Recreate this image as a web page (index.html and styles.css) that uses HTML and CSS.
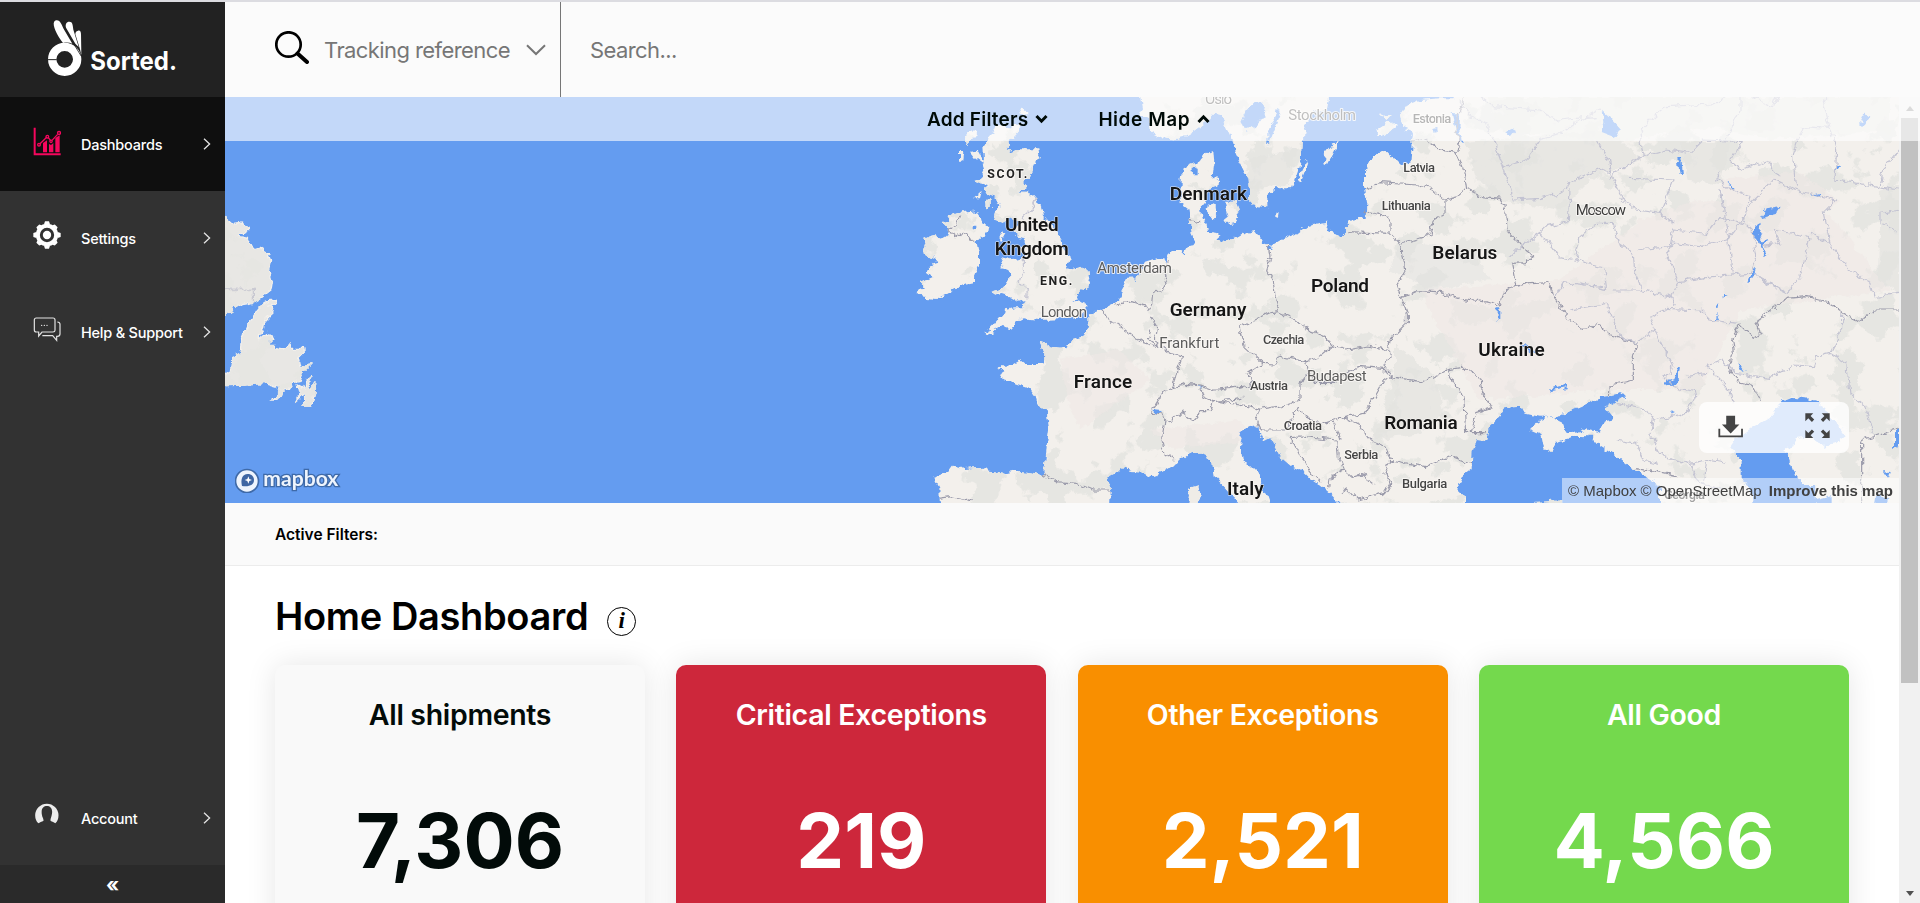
FILE: index.html
```html
<!DOCTYPE html>
<html lang="en">
<head>
<meta charset="utf-8">
<title>Sorted - Home Dashboard</title>
<link rel="stylesheet" href="styles.css">
</head>
<body>
<div class="top-strip"></div>
<div class="app">
  <nav class="sidebar">
    <div class="brand">
      <svg class="brand-logo" viewBox="60 50 420 190" role="img" aria-label="Sorted">
        <circle cx="134" cy="177" r="37.5" fill="none" stroke="#fff" stroke-width="25"/>
        <path d="M84 178h26" stroke="#222" stroke-width="3"/>
        <path d="M109 60C121 59 125 74 131 86L157 130C148 126 138 126 129 128C118 115 100 86 101 69C102 63 105 60 109 60Z" fill="#fff"/>
        <path d="M148 64C158 64 158 74 160 88L176 140L166 130L138 82C135 72 139 64 148 64Z" fill="#fff"/>
        <path d="M174 91C182 90 183 96 183 104L184 164L180 147L166 102C166 95 169 92 174 91Z" fill="#fff"/>
        <path d="M158 126L184 168" stroke="#222" stroke-width="2.5"/>
        <text x="211" y="209" textLength="260" lengthAdjust="spacingAndGlyphs" class="brand-word">Sorted.</text>
      </svg>
    </div>
    <a class="nav-item active">
      <svg class="nav-icon" viewBox="40 382 84 87"><g fill="#f5075d"><path d="M42 384h6v77h75v6H42z"/><path d="M70 430l12-8v36H70zM88 433l6 3 7-6v28H88zM107 415l13-8v51h-13z"/></g><g fill="none" stroke="#f5075d" stroke-width="4"><path d="M61 432L81 413M86 414l7 9M97 422l17-18"/><circle cx="58" cy="435" r="4"/><circle cx="83" cy="411" r="4"/><circle cx="94" cy="425" r="3.5"/><circle cx="118" cy="400" r="4.5"/></g></svg>
      <span class="nav-label">Dashboards</span>
      <svg class="nav-chevron" viewBox="0 0 8 12"><path d="M1 .8L6.6 6 1 11.2"/></svg>
    </a>
    <a class="nav-item">
      <svg class="nav-icon" viewBox="40 65 84 87"><g transform="translate(82 107)" fill="#fff"><circle r="27.500" fill="none" stroke="#fff" stroke-width="12"/><circle r="12.500"/><path d="M-9-32L-6-41H6L9-32zM-9 32L-6 41H6L9 32zM-32-9L-41-6V6L-32 9zM32-9L41-6V6L32 9z"/><g transform="rotate(45)"><path d="M-9-32L-6-39H6L9-32zM-9 32L-6 39H6L9 32zM-32-9L-39-6V6L-32 9zM32-9L39-6V6L32 9z"/></g></g></svg>
      <span class="nav-label">Settings</span>
      <svg class="nav-chevron" viewBox="0 0 8 12"><path d="M1 .8L6.6 6 1 11.2"/></svg>
    </a>
    <a class="nav-item">
      <svg class="nav-icon" viewBox="40 346 84 87"><g fill="none" stroke="#e2e2e2" stroke-width="3.600"><path d="M50 355h50q6 0 6 6v31q0 5-6 5H67l-10 12v-12h-7q-6 0-6-6v-30q0-6 6-6z"/><path d="M113 367q8 0 8 7v29q0 7-8 7h-2v12l-12-14H68"/></g><g fill="#fff"><circle cx="66" cy="377" r="2"/><circle cx="74" cy="377" r="2"/><circle cx="82" cy="377" r="2"/></g></svg>
      <span class="nav-label">Help &amp; Support</span>
      <svg class="nav-chevron" viewBox="0 0 8 12"><path d="M1 .8L6.600 6 1 11.2"/></svg>
    </a>
    <a class="nav-item account">
      <svg class="nav-icon" viewBox="101 65 84 87"><path d="M117 132A35 35 0 1 1 168 132C164 129 159 127 154 125C152 120 156 115 157 108C162 88 153 80 143 80C132 80 124 88 128 108C129 115 134 120 132 125C127 127 121 129 117 132Z" fill="#ececec"/></svg>
      <span class="nav-label">Account</span>
      <svg class="nav-chevron" viewBox="0 0 8 12"><path d="M1 .8L6.6 6 1 11.2"/></svg>
    </a>
    <div class="collapse">«</div>
  </nav>

  <main class="main">
    <header class="search-bar">
      <div class="search-type">
        <svg class="search-icon" viewBox="0 0 34 33"><circle cx="13.500" cy="13.500" r="12.200" fill="none" stroke="#000" stroke-width="2.700"/><path d="M22.500 22.500L32 31" stroke="#000" stroke-width="4" stroke-linecap="round"/></svg>
        <span class="search-label">Tracking reference</span>
        <svg class="search-chevron" viewBox="0 0 20 12"><path d="M1 1.200L10 10 19 1.200"/></svg>
      </div>
      <div class="search-input">Search...</div>
    </header>

    <div class="viewport">
      <div class="page">
        <section class="map">
          <svg class="map-canvas" viewBox="225 97 1674 406">
            <defs>
              <filter id="rough" x="0" y="0" width="100%" height="100%" color-interpolation-filters="sRGB">
                <feTurbulence type="fractalNoise" baseFrequency="0.13" numOctaves="3" seed="4" result="n"/>
                <feDisplacementMap in="SourceGraphic" in2="n" scale="8" xChannelSelector="R" yChannelSelector="G"/>
              </filter>
              <filter id="grey" x="0" y="0" width="100%" height="100%" color-interpolation-filters="sRGB">
                <feTurbulence type="fractalNoise" baseFrequency="0.030" numOctaves="4" seed="11"/>
                <feColorMatrix values="0 0 0 0 .9  0 0 0 0 .9  0 0 0 0 .885  22 0 0 0 -12.2"/>
                <feComposite in2="SourceGraphic" operator="in"/>
              </filter>
            </defs>
            <rect x="225" y="97" width="1674" height="406" fill="#649cf0"/>
            <g filter="url(#rough)">
              <rect x="225" y="97" width="1674" height="406" fill="#649cf0"/>
              <g id="land" fill="#f3f0ec">
                <g transform="translate(225 90) scale(.33333)" fill="#e8e7e4" stroke="#f3f0ec" stroke-width="4">
                  <path d="M-25 350L5 390 20 400 40 398 70 412 65 425 40 430 40 440 70 445 80 470 90 480 105 475 130 490 140 515 133 545 142 575 138 600 100 630 85 638 40 645 10 665 0 680-25 690z"/>
                  <path d="M100 655L130 632 152 630 150 640 130 645 140 658 135 675 120 690 115 715 100 740 100 750 125 728 145 740 130 755 150 775 180 780 190 760 200 775 232 775 235 790 220 805 225 830 255 825 235 845 225 875 205 878 190 900 170 905 160 930 138 930 165 905 170 895 150 890 120 880 60 885 0 887-25 865 20 835 25 800 45 790 50 750 70 700 85 680z"/>
                  <path d="M220 885L240 895 245 870 262 855 250 880 260 895 272 880 270 910 260 945 237 945 235 915 212 935 225 905z"/>
                </g>
                <g transform="translate(880 90) scale(.33333)">
                  <path d="M327 152L345 108 360 105 395 110 425 103 423 118 405 140 385 155 387 170 380 185 405 178 475 178 478 195 465 225 450 262 432 280 442 288 415 305 440 305 460 318 472 332 485 342 492 380 505 395 530 425 548 455 550 478 565 492 570 515 558 535 575 538 600 530 622 540 628 565 622 590 608 600 598 612 595 628 580 632 618 645 620 660 600 680 540 688 475 690 425 685 405 695 400 717 368 708 345 722 330 730 313 725 335 715 355 690 370 672 372 658 400 652 428 652 440 630 412 635 390 622 368 615 345 620 335 605 360 598 375 585 388 565 385 540 360 535 372 520 362 502 385 508 415 505 430 500 425 475 437 468 437 445 410 440 400 420 415 400 390 385 368 398 342 392 348 365 358 350 348 320 325 312 318 300 320 285 290 275 300 262 310 240 305 225 312 210 310 170z"/>
                  <path d="M200 378L250 360 262 370 295 367 305 395 322 410 318 435 300 445 290 455 297 490 297 525 282 560 282 580 240 588 200 610 160 630 130 625 112 602 135 590 118 580 160 560 140 545 160 520 175 515 155 505 130 490 138 465 130 440 150 432 185 445 200 435 208 415 185 405 205 392z"/>
                  <path d="M255 140L290 115 285 140 262 165zM240 180L250 180 247 215 240 215zM270 185L290 182 300 200 312 212 305 220 285 205zM282 325L305 305 300 325zM318 330L335 328 335 350 320 355zM415 60L425 55 440 68 420 75zM365 430l8 5-8 14-8-3z"/>
                  <path d="M1000 180L1003 220 998 260 1020 270 1018 290 990 295 975 318 975 335 962 350 968 385 980 405 985 425 1025 432 1005 450 1030 460 1080 440 1110 435 1110 1260 180 1260 178 1190 163 1160 200 1148 215 1127 240 1130 250 1137 310 1133 330 1142 375 1148 400 1142 440 1145 485 1152 495 1130 500 1070 508 1015 500 965 475 950 468 920 450 895 400 878 370 870 360 855 375 845 355 835 365 825 400 822 420 810 435 822 490 822 490 785 478 755 500 762 503 772 560 778 565 755 610 738 627 718 625 675 665 660 705 640 712 628 730 595 745 560 770 560 795 515 850 498 855 515 870 480 905 480 910 495 925 468 945 465 935 430 930 395 925 360 905 345 905 262 912 230 935 222 955 218 980 188z"/>
                  <path d="M775-20L790 60 782 75 800 85 820 130 850 145 880 148 915 140 950 118 980 95 995 70 1025 75 1040 110 1060 153 1065 190 1095 250 1108 265 1112 345 1162 352 1162 315 1185 295 1235 295 1245 270 1265 210 1270 130 1278 100 1295 70 1340 60 1355-20z"/>
                  <path d="M985 340L1010 350 1015 370 1000 385 980 360zM1035 335L1070 335 1080 360 1065 380 1070 395 1040 402 1030 390 1045 378z"/>
                </g>
                <g transform="translate(1220 90) scale(.33333)">
                  <path d="M-10 470L0 458 30 458 65 435 80 425 105 420 120 440 130 460 160 465 185 450 230 432 260 408 320 398 330 425 365 435 390 410 388 390 440 385 442 340 435 300 435 245 455 200 495 178 520 205 545 230 575 215 578 155 582 128 550 115 540 75 560 45 600 30 660 25 700 25 720-20 2120-20 2120 1260-10 1260z"/>
                  <path d="M315 190L340 160 355 155 335 195 320 225 312 220zM262 210L258 235 240 280 235 275 245 240zM165 368l14 2-2 12-10-4zM470 120L510 95 530 110 490 135 472 135zM480 78L515 75 500 92z"/>
                </g>
              </g>
              <use href="#land" filter="url(#grey)"/>
              <g opacity=".55" fill="#efe8e5">
                <path d="M1420 290L1560 280 1640 220 1700 200 1830 215 1890 290 1740 310 1700 390 1600 390 1480 400 1440 330zM1150 430l90-10 10 22-80 6zM1060 360l60-10 30 30-70 50-10-20zM1720 180l80-8 40 30-60 40-50-10z"/>
              </g>
              <g opacity=".7" fill="#e2e2df">
                <path d="M1465 142L1610 130 1640 160 1590 180 1560 210 1500 200 1475 175zM1680 142L1730 142 1720 185 1690 180zM1880 190l20-5v110l-22-15zM1245 160l50-10-5 35-40 5zM1395 345l40 30 10 40-30 20-45 5 25-40z"/>
              </g>
              <g opacity=".5" fill="#e2e2df">
                <path d="M1490 97h400v34l-120 8-60-12-90 14-120-10zM1400 240l70 10 20 30-60 10-40-20z"/>
              </g>
              <g fill="#649cf0">
                <g transform="translate(880 90) scale(.33333)">
                  <path d="M690 1260L692 1205 685 1160 730 1135 755 1143 790 1145 810 1160 840 1150 890 1120 930 1083 960 1092 995 1110 1005 1165 1030 1190 1060 1225 1090 1260zM935 230h15v20h-15zM275 404h14v13h-14zM825 955l22 2-5 8-18 2zM950 885l15 3-2 8zM760 555l12-5-5 25z"/>
                  <path d="M925 1195L955 1185 962 1215 955 1245 925 1240 930 1215z" fill="#efece7"/>
                  <path d="M1085 95L1100 60 1120 40 1155 42 1150 75 1125 110 1095 120zM1165 115l20-28 8-30 12 5-15 40-25 65z"/>
                </g>
                <g transform="translate(1220 90) scale(.33333)">
                  <path d="M55 1030L75 1015 115 1005 120 1035 130 1055 150 1045 165 1070 180 1100 215 1130 250 1145 270 1165 300 1185 330 1210 375 1260 160 1260 145 1215 125 1200 115 1150 85 1120 65 1110 60 1075 65 1045z"/>
                  <path d="M695 70L720 70 718 130 735 160 720 152 705 110zM640 120l12-3 2 12-10 6zM858 130l15-15 15 8-12 15zM833 655h8v35h-8zM900 763l20 5 30 22-10 5-25-20zM985 895l35-5v8l-30 4zM145 465l12 3v12h-10z"/>
                  <path d="M735 1260L735 1225 710 1195 735 1150 755 1135 758 1080 770 1050 800 1055 805 1015 840 980 850 955 900 950 910 970 960 980 980 978 975 985 930 1020 965 1035 972 1078 990 1082 1010 1055 1060 1040 1120 1040 1145 1070 1185 1095 1230 1130 1270 1155 1310 1180 1320 1200 1320 1260 1030 1260 1030 1230 950 1235 940 1260z"/>
                </g>
                <g transform="translate(1540 90) scale(.33333)">
                  <path d="M0 970L45 985 80 965 130 945 175 925 210 920 250 910 252 920 195 955 220 985 195 990 180 1025 140 1015 120 1030 80 1030 70 1000 40 985z"/>
                  <path d="M5 1035L-5 990 30 985 75 1030 150 1025 140 1042 100 1040 60 1052 25 1082 15 1082z" fill="#f3f0ec"/>
                  <path d="M725 935L760 920 800 925 840 935 855 965 900 1010 918 1035 890 1055 870 1060 850 1085 850 1060 800 1040 760 1045 765 1065 725 1080 740 1090 755 1130 765 1160 780 1165 780 1185 825 1185 830 1260 640 1260 640 1220 605 1160 605 1115 585 1090 570 1075 590 1045 640 1010 690 980z"/>
                  <path d="M185 62l25 22 30 32-15 25-40-15 5-30zM412 198h12l5 60h-10zM565 277l20 18h-10zM810 315l25-5 8 12zM960 100l15-30 10 10-15 25zM660 385l20-30 45-8-15 25zM642 410l20-12-5 35 12 22 16-5-15 25 15 20-12 2-15-42-17-18zM640 535h8l-15 45-8 2zM550 615h16l-14 8zM530 650l8-12-3 20zM525 690l15-15-5 14zM592 820l10 2 15 20-15-2zM415 832h8l-10 50-38 8 8-20 20-5zM390 962l20 8-12 2zM25 895l55-10v10l-50 8zM887 240l5-15 13-2-12 15zM1062 1080v-55l15-15v60zM1032 1140l20 3-5 20zM830 1230l45-12v45h-45zM1010 1210l35 15-5 25-35-10z"/>
                </g>
              </g>
              <g fill="none" stroke="#9a9aaa" stroke-width="3.500" stroke-linejoin="round">
                <path d="M-10 598H85V638" transform="translate(225 90) scale(.33333)" stroke="#c6c6d0"/>
                <g transform="translate(880 90) scale(.33333)">
                  <path d="M240 375L232 400 208 420 225 440 250 430 270 445 290 452M865 510L850 550 858 580 845 605 815 610 812 640 800 660M705 645L755 635 800 650M665 660L680 685 735 720 780 755 830 770M812 680L830 710 825 740 832 765 805 745 812 722M832 765L870 790 905 800 890 845 880 888M1090 925L1000 935 990 965 960 965 940 992 905 965 880 990 855 995 845 965 815 975 820 955 850 905 880 890 920 880 960 885 970 920 1000 935M855 995L845 1045 855 1090 885 1110M960 885L1000 900 1040 900 1090 890M485 1150L530 1175 590 1180 640 1200 690 1200M180 1225L215 1220 275 1232M925 388L960 395"/>
                  <path d="M468 328L455 360 425 385M430 500L430 540 420 580 442 600 440 625" stroke="#c3c3d2"/>
                </g>
                <g transform="translate(1220 90) scale(.33333)">
                  <path d="M145 465L150 505 140 540 160 570 165 620 178 665 150 668 60 712 75 770 130 820 165 822 178 798 260 815 290 805 335 768 320 740 255 715 240 705 215 685 178 668M335 768L380 780 440 768 505 778 512 795M505 778L510 750 562 700 562 670 545 625 528 580 555 545 540 460 510 430 385 425M510 430L510 395 500 380 430 360M437 300L480 278 540 282 600 285 640 300 675 330 675 370 640 390 630 435 600 445 545 462M675 330L715 320 740 298 735 260 722 215 708 185M580 155L615 148 650 175 708 185 722 155 708 120 715 70 735 20M740 298L790 320 840 325 855 350 862 420 900 465 935 495 920 518 875 520 888 590M545 625L590 602 650 605 720 625 780 632 838 645 850 605 888 590 930 578 990 575 1000 620 1020 650 1050 690 1090 715 1140 705 1170 735 1250 760 1240 800 1240 870 1170 885 1168 920M260 815L265 845 285 880 340 880 380 850 420 830 490 835 512 795M130 820L85 850 95 885 0 900M265 845L240 880 240 930 200 945 120 958 60 945 0 935M120 958L110 985 125 1020 195 1020 235 955 270 990 310 1000 370 980 435 970 465 920 490 875 515 860M490 835L515 860 600 875 640 860 680 840 725 832 780 865 785 900 815 950 770 965 750 1025M680 840L735 930 740 1025 800 1025M340 995L360 1050M370 980L420 1005 455 1055 500 1075M210 1040L240 1038 350 1050 355 1100 370 1140 330 1165 325 1195M210 1040L240 1100 300 1175M370 1140L400 1165 430 1155 465 1185M500 1075L510 1110 620 1130 690 1100 755 1125M510 1110L495 1150 515 1180 490 1215M360 1220L380 1195 415 1230 500 1205"/>
                </g>
                <g transform="translate(1540 90) scale(.33333)">
                  <path d="M665 935L640 890 600 880 565 835 580 790 575 745 600 705 640 745 660 730 650 690 740 625 800 620 860 635 905 665 950 695 1000 660 1090 660M285 1135L340 1145 410 1160M965 1250L965 1050 1090 1010"/>
                  <g stroke="#c3c3d2">
                    <path d="M-240 30L-210 80-160 100-140 150-110 230-80 330 0 325M-110 230L-40 210 0 150 60 130 120 90 180 60M170 150L205 210 215 260 250 330 290 360 360 370 400 400M0 325L80 300 90 275 180 235 215 250M0 430L-60 470-90 500M60 500L0 430 20 410 85 395 90 300M60 500L105 510 120 440 170 400 220 400 235 460 280 490 285 550 310 600 215 600M105 510L190 530 200 595 70 575 45 620M90 660L200 640 240 740 290 760 345 720 330 685 380 655 480 660 510 690 590 700M345 720L380 790 400 830 375 860 400 890 460 900 465 930M310 600L390 620 410 650M390 620L415 575 520 560 630 550 650 500 640 430 610 400 540 380 500 430 400 420 390 470 290 480M415 575L380 490 400 460 480 470 560 450 600 400 640 330 700 270 760 300 830 315 890 330 850 370 870 460 930 540 990 580 1000 620 1077 610M640 550L740 610 780 560 810 440 700 420 720 460 670 470M740 610L700 590 650 560M870 460L810 430M205 265L270 220 310 200 300 130 330 90 380 50 540 40 560 0M310 200L380 180 450 190 490 150 610 155 570 210 600 240 680 210 720 260M540 240L530 270 580 300 630 320 610 400M270 265L400 270 360 370 M540 300L560 400 580 550M560 150L600 60 600 20M770 290L760 190 790 110 870 115 890 180 885 270 1020 290 1030 240 1077 180M870 115L850 40 860 0M1020 290L1077 300M1077 360L1020 370 1020 400 1070 420M565 835L590 850 690 865 760 825 820 830 830 800 870 790 905 720 905 670M870 790L920 820 930 910 980 950 1000 1030M465 930L440 970 340 990 320 960 230 940M500 830L550 810 590 850M500 830L570 900 580 940M440 860L500 850M340 990L330 1030 370 1100 450 1120 500 1110 560 1120M230 1050L290 1060 310 1110 350 1120M450 1120L480 1180 550 1200M500 1110L490 1180M-180 20L-140 50 0 60 50 90 170 80M640 20L700 50 720 0"/>
                  </g>
                </g>
              </g>
            </g>
            <g class="labels">
              <g transform="translate(880 90) scale(.33333)">
                <g class="country">
                  <text x="375" y="424" textLength="161">United</text><text x="344" y="494" textLength="222">Kingdom</text>
                  <text x="581" y="893" textLength="176">France</text><text x="869" y="677" textLength="230">Germany</text>
                  <text x="869" y="329" textLength="232">Denmark</text><text x="1041" y="1215" textLength="110">Italy</text>
                  <text x="1293" y="607" textLength="174">Poland</text><text x="1657" y="508" textLength="195">Belarus</text>
                  <text x="1513" y="1017" textLength="220">Romania</text><text x="1795" y="797" textLength="199">Ukraine</text>
                </g>
                <g class="region"><text x="322" y="264" textLength="120">SCOT.</text><text x="480" y="584" textLength="97">ENG.</text></g>
                <g class="city">
                  <text x="652" y="548" textLength="224">Amsterdam</text><text x="482" y="682" textLength="139">London</text>
                  <text x="838" y="774" textLength="180">Frankfurt</text><text x="975" y="41" textLength="81">Oslo</text>
                  <text x="1225" y="91" textLength="203">Stockholm</text><text x="1281" y="872" textLength="179">Budapest</text>
                  <text x="2087" y="375" textLength="151" class="dark">Moscow</text>
                </g>
                <g class="minor">
                  <text x="1598" y="100" textLength="116">Estonia</text><text x="1570" y="246" textLength="95">Latvia</text>
                  <text x="1505" y="360" textLength="147">Lithuania</text><text x="1149" y="762" textLength="124">Czechia</text>
                  <text x="1110" y="900" textLength="114">Austria</text><text x="1211" y="1021" textLength="115">Croatia</text>
                  <text x="1393" y="1107" textLength="102">Serbia</text><text x="1566" y="1194" textLength="136">Bulgaria</text>
                  <text x="2352" y="1226" textLength="123">Georgia</text>
                </g>
              </g>
            </g>
            <g transform="translate(225 90) scale(.33333)">
              <circle cx="66" cy="1173" r="34.500" fill="#eef4fd" stroke="#3f6aa8" stroke-width="5"/>
              <path d="M51 1188C46 1167 52 1153 68 1152C80 1152 87 1160 87 1170C87 1185 73 1191 51 1188Z" fill="#3f66a3"/>
              <path d="M70 1159l3 8 8 3-8 3-3 8-3-8-8-3 8-3z" fill="#fff"/>
              <text x="115" y="1188" textLength="225" lengthAdjust="spacingAndGlyphs" class="mapbox-word">mapbox</text>
            </g>
          </svg>
          <div class="map-tools">
            <svg class="tool-icon" viewBox="533 967 76 76"><path d="M558 975h27v27h13l-26.500 27-26.500-27h13z" fill="#444"/><path d="M537 1015v23h69v-23" fill="none" stroke="#444" stroke-width="5.500"/></svg>
            <svg class="tool-icon" viewBox="795 968 76 76"><g fill="#444"><path d="M796 969h24l-8 8 11 11-7 7-11-11-9 9z"/><path d="M870 969h-24l8 8-11 11 7 7 11-11 9 9z"/><path d="M796 1044h24l-8-8 11-11-7-7-11 11-9-9z"/><path d="M870 1044h-24l8-8-11-11 7-7 11 11 9-9z"/></g></svg>
          </div>
          <div class="attribution"><span>© Mapbox</span><span>© OpenStreetMap</span><b>Improve this map</b></div>
        </section>

        <section class="active-filters">Active Filters:</section>

        <section class="dashboard">
          <div class="title-row">
            <h1 class="title">Home Dashboard</h1>
            <span class="info">i</span>
          </div>
          <div class="cards">
            <article class="card plain"><h2>All shipments</h2><p>7,306</p></article>
            <article class="card critical"><h2>Critical Exceptions</h2><p>219</p></article>
            <article class="card other"><h2>Other Exceptions</h2><p>2,521</p></article>
            <article class="card good"><h2>All Good</h2><p>4,566</p></article>
          </div>
        </section>
      </div>

      <div class="scrollbar">
        <span class="arrow up"></span>
        <span class="thumb"></span>
        <span class="arrow down"></span>
      </div>

      <div class="filter-band">
        <span class="band-item">Add Filters<svg class="band-icon" viewBox="0 0 13 10"><path d="M1.500 2L6.500 7.200 11.500 2"/></svg></span>
        <span class="band-item hide-map">Hide Map<svg class="band-icon" viewBox="0 0 13 10"><path d="M1.500 8L6.500 2.800 11.500 8"/></svg></span>
      </div>
    </div>
  </main>
</div>
</body>
</html>
```

FILE: styles.css
```css
* { box-sizing: border-box; }
html, body { height: 100%; }
body {
  margin: 0;
  display: flex;
  flex-direction: column;
  overflow: hidden;
  font-family: Inter, "Liberation Sans", sans-serif;
  color: #000;
  background: #fff;
}
.top-strip { flex: none; height: 2px; background: #dcdce1; }
.app { flex: 1; min-height: 0; display: flex; }

/* Sidebar */
.sidebar { flex: none; width: 225px; display: flex; flex-direction: column; background: #323232; color: #fff; }
.brand { height: 95px; background: #222; padding: 14.700px 0 0 40px; }
.brand-logo { display: block; width: 140px; height: 63.300px; overflow: visible; }
.brand-word { font: 700 78px Inter, sans-serif; fill: #fff; }
.nav-item { height: 94px; display: flex; align-items: center; padding-left: 33px; }
.nav-item.active { background: #0f0f0f; }
.nav-item.account { margin-top: auto; }
.nav-icon { width: 28px; height: 29px; margin-right: 20px; margin-top: -5px; }
.nav-label { width: 122px; font-size: 14.500px; font-weight: 500; letter-spacing: -.22px; white-space: nowrap; }
.nav-chevron { width: 8px; height: 12px; fill: none; stroke: #e4e4e4; stroke-width: 1.300; }
.collapse { height: 38px; background: #2a2a2a; text-align: center; font-size: 20px; font-weight: 700; line-height: 41px; }

/* Search bar */
.main { flex: 1; min-width: 0; display: flex; flex-direction: column; }
.search-bar { flex: none; height: 95px; display: flex; background: #fbfbfb; color: #767676; font-size: 22px; letter-spacing: -.58px; }
.search-type { flex: none; width: 336px; border-right: 1px solid #767676; display: flex; align-items: center; padding-left: 50px; }
.search-icon { flex: none; width: 34px; height: 33px; margin-right: 15px; margin-top: -4px; }
.search-label { flex: none; width: 202px; white-space: nowrap; }
.search-chevron { flex: none; width: 20px; height: 12px; fill: none; stroke: #767676; stroke-width: 2; }
.search-input { padding-left: 29px; display: flex; align-items: center; }

/* Scrolling area */
.viewport { position: relative; flex: 1; min-height: 0; display: flex; overflow: hidden; }
.page { flex: 1; min-width: 0; }
.filter-band {
  position: absolute; top: 0; left: 0; right: 0; height: 44px;
  background: rgba(255, 255, 255, .61);
  display: flex; align-items: center; gap: 50px; padding-left: 702px;
  font-size: 19px; font-weight: 600; letter-spacing: .2px; color: #000b08;
}
.band-item { display: flex; align-items: center; gap: 7px; white-space: nowrap; }
.hide-map { letter-spacing: .55px; }
.band-icon { width: 13px; height: 10px; fill: none; stroke: #000b08; stroke-width: 3; }
.scrollbar { width: 21px; background: #f1f1f1; display: flex; flex-direction: column; align-items: center; }
.arrow { border: 4.500px solid transparent; }
.arrow.up { margin-top: 9px; border-top: 0; border-bottom: 5px solid #a3a3a3; }
.arrow.down { margin-top: auto; margin-bottom: 7px; border-bottom: 0; border-top: 5px solid #505050; }
.thumb { width: 17px; height: 565px; margin-top: 7px; background: #c1c1c1; }

/* Map */
.map { position: relative; height: 406px; background: #649cf0; overflow: hidden; }
.map-canvas { display: block; width: 1674px; height: 406px; }
.labels { font-family: Roboto, sans-serif; }
.labels text { stroke: rgba(250, 248, 246, .85); stroke-width: 6px; stroke-linejoin: round; paint-order: stroke; }
.country { font-size: 57px; font-weight: 600; fill: #161616; }
.country text { stroke-width: 3px; }
.region { font-size: 37px; font-weight: 700; fill: #222; }
.city { font-size: 45px; fill: #5c5c5c; }
.city .dark { fill: #3c3c3c; }
.minor { font-size: 39px; font-weight: 500; fill: #444; }
.mapbox-word { font: 700 60px Lato, sans-serif; fill: #eef4fd; stroke: #3f6aa8; stroke-width: 8px; paint-order: stroke; }
.map-tools {
  position: absolute; right: 50px; bottom: 50px; width: 150px; height: 51px;
  border-radius: 8px; background: rgba(255, 255, 255, .8);
  display: flex; align-items: center; justify-content: space-between; padding: 0 19px;
}
.tool-icon { width: 25px; height: 25px; margin-top: -4px; }
.attribution {
  position: absolute; right: 0; bottom: 0; width: 337px; height: 25px;
  background: rgba(255, 255, 255, .5); color: #404040;
  font: 15px/25px "Liberation Sans", Arial, sans-serif;
  display: flex; gap: 4px; padding-left: 6px; white-space: nowrap;
}
.attribution b { margin-left: 3px; }

/* Dashboard */
.active-filters { height: 63px; background: #fafafa; border-bottom: 1px solid #ececec; padding-left: 50px; font-size: 15.500px; font-weight: 600; line-height: 64px; }
.dashboard { padding: 0 50px; }
.title-row { display: flex; align-items: center; height: 99px; padding-top: 1px; }
.title { margin: 0; font-size: 38px; font-weight: 600; line-height: 46px; letter-spacing: -.35px; white-space: nowrap; }
.info {
  margin: 11px 0 0 19px; width: 29px; height: 29px; border: 1.500px solid #000; border-radius: 50%;
  font: italic 700 23px/26px "Liberation Serif", serif; text-align: center;
}
.cards { display: grid; grid-template-columns: repeat(4, 1fr); column-gap: 31.300px; }
.card { height: 330px; border-radius: 10px; padding-top: 32px; text-align: center; color: #fff; box-shadow: 0 0 30px rgba(0, 0, 0, .1); }
.card h2 { margin: 0; font-size: 28.500px; font-weight: 600; line-height: 36px; letter-spacing: -.33px; white-space: nowrap; }
.card p { margin: 61px 0 0; font-size: 76px; font-weight: 700; line-height: 92px; }
.plain { background: #f9f9f9; color: #020b09; }
.critical { background: #cd273b; }
.other { background: #f98f00; }
.good { background: #74d94d; }
```
